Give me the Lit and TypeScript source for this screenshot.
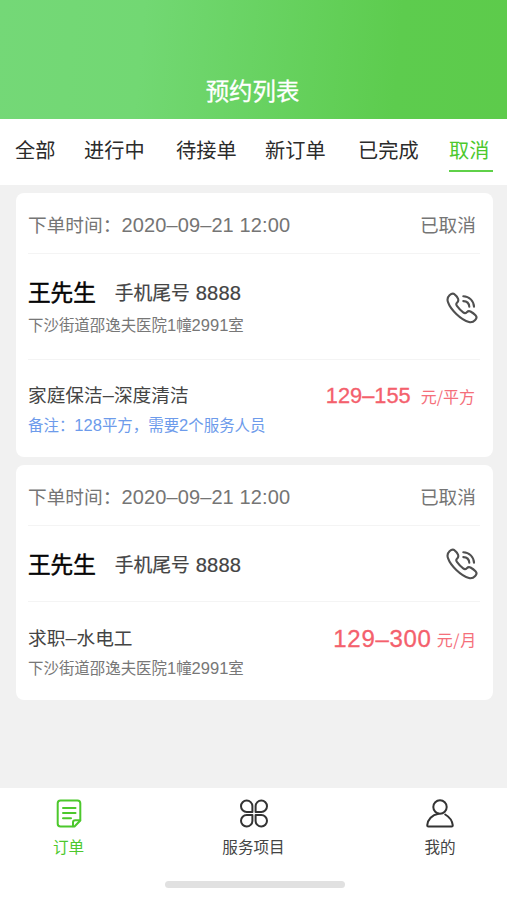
import { LitElement, html, css, svg, nothing } from "lit";
import { customElement, property } from "lit/decorators.js";

interface Order {
  time: string;
  status: string;
  name: string;
  phone: string;
  address?: string;
  service: string;
  detail: string;
  detailKind: "note" | "address";
  price: string;
  unit: string;
  size: "compact" | "large";
}

const TABS = ["全部", "进行中", "待接单", "新订单", "已完成", "取消"];

const ORDERS: Order[] = [
  {
    time: "2020–09–21 12:00",
    status: "已取消",
    name: "王先生",
    phone: "8888",
    address: "下沙街道邵逸夫医院1幢2991室",
    service: "家庭保洁–深度清洁",
    detail: "备注：128平方，需要2个服务人员",
    detailKind: "note",
    price: "129–155",
    unit: "元/平方",
    size: "compact",
  },
  {
    time: "2020–09–21 12:00",
    status: "已取消",
    name: "王先生",
    phone: "8888",
    service: "求职–水电工",
    detail: "下沙街道邵逸夫医院1幢2991室",
    detailKind: "address",
    price: "129–300",
    unit: "元/月",
    size: "large",
  },
];

/* Latin digits and dashes are set slightly larger than the Han characters. */
const mixed = (text: string) =>
  text
    .split(/([0-9–: ]+)/)
    .filter(Boolean)
    .map((part) => (/^[0-9–: ]+$/.test(part) ? html`<span class="num">${part}</span>` : part));

const numStyles = css`
  .num {
    font-family: "Liberation Sans", sans-serif;
    font-size: 1.07em;
    line-height: 0;
    white-space: pre;
  }
`;

@customElement("order-card")
export class OrderCard extends LitElement {
  @property({ attribute: false }) order!: Order;

  static styles = [
    numStyles,
    css`
      :host {
        display: block;
        box-sizing: border-box;
        background: #fff;
        border-radius: 8px;
        padding: 0 13px 0 12px;
        color: #444;
        white-space: nowrap;
      }
      .head {
        display: flex;
        justify-content: space-between;
        box-sizing: border-box;
        height: 61px;
        padding: 16px 4px 0 0;
        line-height: 30px;
        font-size: 18.7px;
        color: #757575;
        border-bottom: 1px solid #f4f4f4;
      }
      .head .num {
        letter-spacing: 0.12px;
      }
      .customer {
        display: flex;
        justify-content: space-between;
        align-items: center;
        padding: 22px 2px 19px 0;
        border-bottom: 1px solid #f4f4f4;
      }
      .customer.single {
        padding-bottom: 21px;
      }
      .who {
        display: flex;
        align-items: center;
        box-sizing: border-box;
        height: 32px;
        padding-bottom: 2px;
      }
      .name {
        font-size: 22.6px;
        color: #050505;
        -webkit-text-stroke: 0.5px #050505;
        margin-right: 19px;
      }
      .tail {
        font-size: 18.8px;
        -webkit-text-stroke: 0.2px #444;
      }
      .tail .num {
        letter-spacing: 0.2px;
      }
      .address {
        font-size: 15.45px;
        line-height: 32px;
        color: #777;
      }
      .service {
        display: flex;
        justify-content: space-between;
        padding: 19px 5px 18px 0;
        line-height: 30px;
      }
      .service.large {
        padding: 20px 3px 18px 0;
      }
      .title {
        font-size: 18.7px;
      }
      .detail {
        font-size: 15.45px;
      }
      .detail.address {
        line-height: 30px;
      }
      .detail.note {
        color: #6d9beb;
      }
      .price {
        display: flex;
        align-items: center;
        height: 33px;
        color: #f4606c;
      }
      .amount {
        font-family: "Liberation Sans", sans-serif;
        font-size: 21.8px;
        -webkit-text-stroke: 0.3px #f4606c;
        margin-right: 10px;
      }
      .large .amount {
        font-size: 24px;
        letter-spacing: 0.7px;
        margin-right: 5px;
      }
      .unit {
        font-size: 16px;
        opacity: 0.9;
      }
      .large .unit {
        letter-spacing: 0.7px;
      }
    `,
  ];

  render() {
    const o = this.order;
    return html`
      <div class="head">
        <span>下单时间：${mixed(o.time)}</span>
        <span>${o.status}</span>
      </div>
      <div class="customer ${o.address ? "" : "single"}">
        <div>
          <div class="who">
            <span class="name">${o.name}</span>
            <span class="tail">手机尾号${mixed(" " + o.phone)}</span>
          </div>
          ${o.address ? html`<div class="address">${mixed(o.address)}</div>` : nothing}
        </div>
        <svg width="32" height="32" viewBox="0 0 32 32" fill="none" stroke="#505050" stroke-width="2.1" stroke-linecap="round" stroke-linejoin="round">
          <path d="M8.600 2.300C7.100 1.100 5.400 1.500 3.500 3.300C1.400 5.300 1 7.400 2 10.200C3.400 14.200 6.300 18.200 10.300 22C14.500 26 19.300 29.100 23 30C25.500 30.600 27.300 30 29.200 28C30.900 26.200 31 24.700 29.500 23.200C28 21.700 26.300 20.500 24.500 19.500C23.100 18.800 22 19 20.800 20.200C19.500 21.500 18.700 21.500 17.200 20.400C14.800 18.600 12.700 16.400 10.900 13.900C10 12.600 10 11.700 11 10.800C12.400 9.500 12.700 8.400 12 6.700C11.300 5 10.200 3.500 8.600 2.300Z"/>
          <path d="M17.300 4.300C23.300 4.400 27.800 8.900 28 14.800M17.300 9.100C20.700 9.200 23.100 11.500 23.300 14.800"/>
        </svg>
      </div>
      <div class="service ${o.size}">
        <div>
          <div class="title">${mixed(o.service)}</div>
          <div class="detail ${o.detailKind}">${mixed(o.detail)}</div>
        </div>
        <div class="price">
          <span class="amount">${o.price}</span>
          <span class="unit">${o.unit}</span>
        </div>
      </div>
    `;
  }
}

const orderIcon = svg`
  <path d="M19.500 27.500H5.500Q2.700 27.500 2.700 24.700V4.300Q2.700 1.500 5.500 1.500H22.500Q25.300 1.500 25.300 4.300V21.500Z"/>
  <path d="M18 27.300V23.500Q18 21.300 20.200 21.300H25.200M8 9H20.500M8 14H20.500M8 19.300H16"/>`;

const servicesIcon = svg`
  <path d="M12.400 12.900V7.100A5.700 5.700 0 1 0 6.700 12.900Z"/>
  <path d="M15.600 12.900V7.100A5.700 5.700 0 1 1 21.300 12.900Z"/>
  <path d="M12.400 16.100V21.900A5.700 5.700 0 1 1 6.700 16.100Z"/>
  <path d="M15.600 16.100V21.900A5.700 5.700 0 1 0 21.300 16.100Z"/>`;

const profileIcon = svg`
  <circle cx="14" cy="8" r="6.700"/>
  <path d="M12.500 14.800C6 15.800 1.700 20.500 1.200 26.300Q1.200 27.500 2.400 27.500H25.600Q26.800 27.500 26.800 26.300C26.200 21.500 23.500 18 19.200 15.500"/>`;

@customElement("app-root")
export class AppRoot extends LitElement {
  static styles = css`
    :host {
      display: flex;
      flex-direction: column;
      width: 507px;
      height: 900px;
      overflow: hidden;
      background: #f1f1f1;
      font-family: "Noto Sans CJK SC", sans-serif;
    }
    header {
      display: flex;
      justify-content: center;
      align-items: flex-end;
      box-sizing: border-box;
      height: 119px;
      padding: 0 2px 12px 0;
      font-size: 23.4px;
      line-height: 34px;
      color: #fff;
      -webkit-text-stroke: 0.3px #fff;
      background: linear-gradient(95deg, #74d877 0%, #72d873 28%, #5dcc4e 78%, #5dcb4b 100%);
    }
    .tabs {
      display: grid;
      grid-template-columns: 69px 92px 89px 93px 91px 44px;
      box-sizing: border-box;
      height: 66px;
      padding: 16px 0 0 15px;
      background: #fff;
      font-size: 20.2px;
      line-height: 30px;
      color: #2b2b2b;
      white-space: nowrap;
    }
    .tab.active {
      box-sizing: border-box;
      height: 37px;
      color: #4cc82c;
      border-bottom: 2px solid #5fd148;
    }
    main {
      flex: 1;
      display: flex;
      flex-direction: column;
      gap: 8px;
      padding: 8px 14px 0 16px;
    }
    nav {
      display: grid;
      grid-template-columns: 137px 233px 137px;
      box-sizing: border-box;
      height: 93px;
      padding-top: 11px;
      background: #fff;
    }
    .item {
      display: flex;
      flex-direction: column;
      align-items: center;
      font-size: 15.6px;
      line-height: 24px;
      color: #444;
      gap: 6px;
    }
    .item svg {
      stroke: #333;
    }
    .item.active {
      color: #4cc82c;
    }
    .item.active svg {
      stroke: #4cc82c;
    }
    .item:last-child {
      padding-left: 3px;
    }
    .home {
      display: flex;
      justify-content: center;
      height: 19px;
      padding-left: 3px;
      background: #fff;
    }
    .handle {
      width: 180px;
      height: 7px;
      border-radius: 4px;
      background: #e1e1e1;
    }
  `;

  private navItem(icon: unknown, label: string, active = false) {
    return html`
      <div class="item ${active ? "active" : ""}">
        <svg width="28" height="29" viewBox="0 0 28 29" fill="none" stroke-width="2" stroke-linecap="round" stroke-linejoin="round">${icon}</svg>
        <span>${label}</span>
      </div>
    `;
  }

  render() {
    return html`
      <header lang="zh-CN">预约列表</header>
      <div class="tabs" lang="zh-CN">
        ${TABS.map((t) => html`<div class="tab ${t === "取消" ? "active" : ""}">${t}</div>`)}
      </div>
      <main lang="zh-CN">${ORDERS.map((o) => html`<order-card .order=${o}></order-card>`)}</main>
      <nav lang="zh-CN">
        ${this.navItem(orderIcon, "订单", true)}
        ${this.navItem(servicesIcon, "服务项目")}
        ${this.navItem(profileIcon, "我的")}
      </nav>
      <div class="home"><div class="handle"></div></div>
    `;
  }
}
